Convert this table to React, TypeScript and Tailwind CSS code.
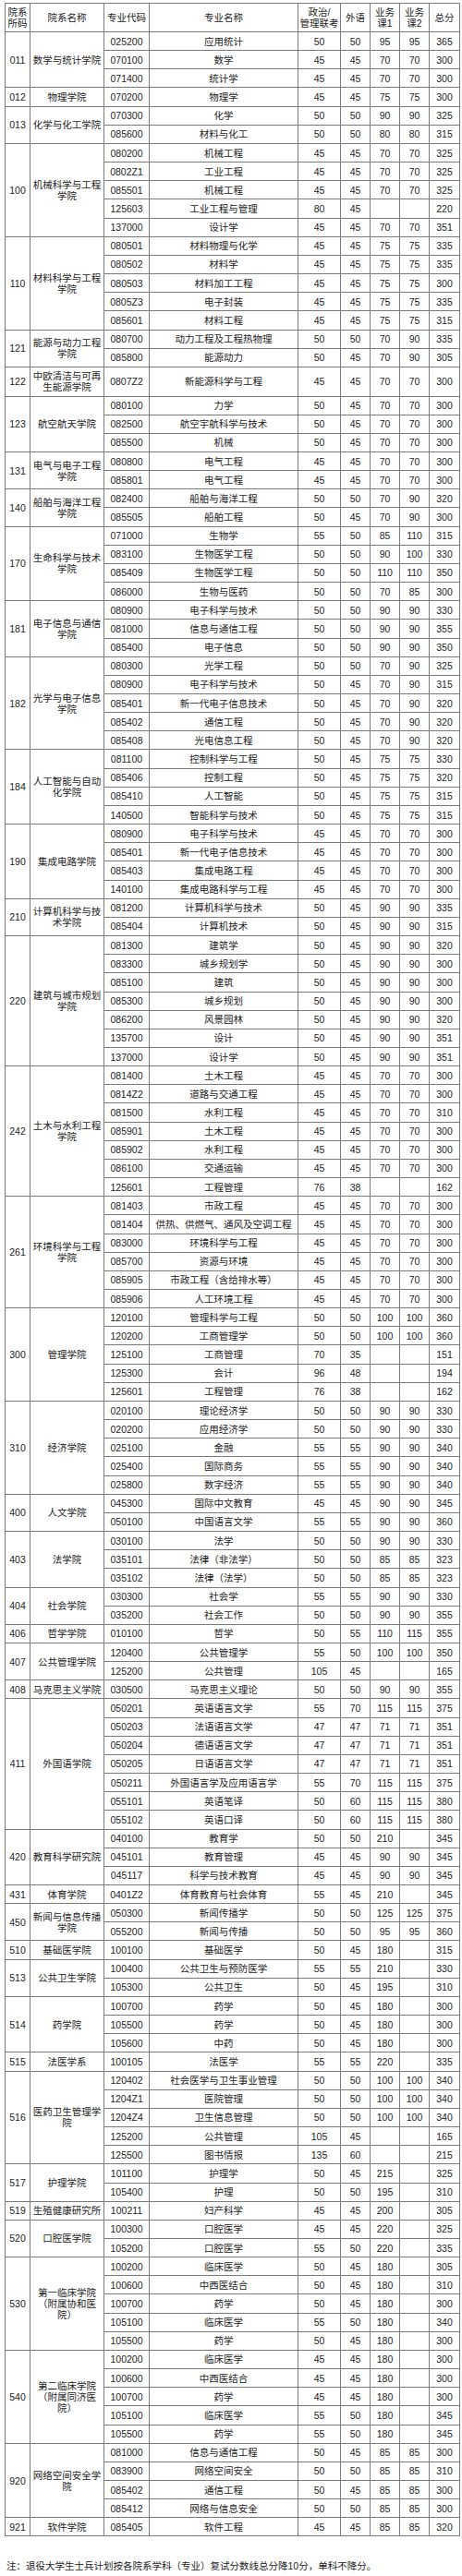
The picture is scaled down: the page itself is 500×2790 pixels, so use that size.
type Group = { code: string; name: string[]; tall?: boolean; rows: string[] };

const groups: Group[] = [
  { code: "011", name: ["数学与统计学院"], rows: ["025200 应用统计 50 50 95 95 365", "070100 数学 45 45 70 70 300", "071400 统计学 45 45 70 70 300"] },
  { code: "012", name: ["物理学院"], rows: ["070200 物理学 45 45 75 75 300"] },
  { code: "013", name: ["化学与化工学院"], rows: ["070300 化学 50 50 90 90 325", "085600 材料与化工 50 50 80 80 315"] },
  {
    code: "100",
    name: ["机械科学与工程", "学院"],
    rows: ["080200 机械工程 45 45 70 70 325", "0802Z1 工业工程 45 45 70 70 325", "085501 机械工程 45 45 70 70 325", "125603 工业工程与管理 80 45 - - 220", "137000 设计学 45 45 70 70 351"],
  },
  {
    code: "110",
    name: ["材料科学与工程", "学院"],
    rows: ["080501 材料物理与化学 45 45 75 75 335", "080502 材料学 45 45 75 75 335", "080503 材料加工工程 45 45 75 75 300", "0805Z3 电子封装 45 45 75 75 335", "085601 材料工程 45 45 75 75 315"],
  },
  { code: "121", name: ["能源与动力工程", "学院"], rows: ["080700 动力工程及工程热物理 50 50 70 90 335", "085800 能源动力 50 45 70 90 305"] },
  { code: "122", name: ["中欧清洁与可再", "生能源学院"], tall: true, rows: ["0807Z2 新能源科学与工程 45 45 70 70 300"] },
  { code: "123", name: ["航空航天学院"], rows: ["080100 力学 50 45 70 70 300", "082500 航空宇航科学与技术 50 45 70 70 300", "085500 机械 50 45 70 70 300"] },
  { code: "131", name: ["电气与电子工程", "学院"], rows: ["080800 电气工程 45 45 70 70 300", "085801 电气工程 45 45 70 70 300"] },
  { code: "140", name: ["船舶与海洋工程", "学院"], rows: ["082400 船舶与海洋工程 50 50 70 90 320", "085505 船舶工程 50 45 70 90 300"] },
  {
    code: "170",
    name: ["生命科学与技术", "学院"],
    rows: ["071000 生物学 55 50 85 110 315", "083100 生物医学工程 50 50 90 100 330", "085409 生物医学工程 50 50 110 110 350", "086000 生物与医药 50 50 70 85 300"],
  },
  { code: "181", name: ["电子信息与通信", "学院"], rows: ["080900 电子科学与技术 50 50 90 90 330", "081000 信息与通信工程 50 50 90 90 355", "085400 电子信息 50 50 90 90 350"] },
  {
    code: "182",
    name: ["光学与电子信息", "学院"],
    rows: ["080300 光学工程 50 50 70 90 325", "080900 电子科学与技术 50 45 70 90 315", "085401 新一代电子信息技术 50 45 70 90 320", "085402 通信工程 50 45 70 90 320", "085408 光电信息工程 50 45 70 90 320"],
  },
  {
    code: "184",
    name: ["人工智能与自动", "化学院"],
    rows: ["081100 控制科学与工程 50 45 75 75 330", "085406 控制工程 50 45 75 75 320", "085410 人工智能 50 45 75 75 315", "140500 智能科学与技术 50 45 75 75 315"],
  },
  {
    code: "190",
    name: ["集成电路学院"],
    rows: ["080900 电子科学与技术 45 45 70 70 300", "085401 新一代电子信息技术 45 45 70 70 300", "085403 集成电路工程 45 45 70 70 300", "140100 集成电路科学与工程 45 45 70 70 300"],
  },
  { code: "210", name: ["计算机科学与技", "术学院"], rows: ["081200 计算机科学与技术 50 45 90 90 335", "085404 计算机技术 50 45 90 90 315"] },
  {
    code: "220",
    name: ["建筑与城市规划", "学院"],
    rows: [
      "081300 建筑学 50 45 90 90 320",
      "083300 城乡规划学 50 45 90 90 300",
      "085100 建筑 50 45 90 90 300",
      "085300 城乡规划 50 45 90 90 300",
      "086200 风景园林 50 45 90 90 320",
      "135700 设计 50 45 90 90 351",
      "137000 设计学 50 45 90 90 351",
    ],
  },
  {
    code: "242",
    name: ["土木与水利工程", "学院"],
    rows: [
      "081400 土木工程 45 45 70 70 300",
      "0814Z2 道路与交通工程 45 45 70 70 300",
      "081500 水利工程 45 45 70 70 310",
      "085901 土木工程 45 45 70 70 300",
      "085902 水利工程 45 45 70 70 300",
      "086100 交通运输 45 45 70 70 300",
      "125601 工程管理 76 38 - - 162",
    ],
  },
  {
    code: "261",
    name: ["环境科学与工程", "学院"],
    rows: [
      "081403 市政工程 45 45 70 70 300",
      "081404 供热、供燃气、通风及空调工程 45 45 70 70 300",
      "083000 环境科学与工程 45 45 70 70 300",
      "085700 资源与环境 45 45 70 70 300",
      "085905 市政工程（含给排水等） 45 45 70 70 300",
      "085906 人工环境工程 45 45 70 70 300",
    ],
  },
  {
    code: "300",
    name: ["管理学院"],
    rows: ["120100 管理科学与工程 50 50 100 100 360", "120200 工商管理学 50 50 100 100 360", "125100 工商管理 70 35 - - 151", "125300 会计 96 48 - - 194", "125601 工程管理 76 38 - - 162"],
  },
  {
    code: "310",
    name: ["经济学院"],
    rows: ["020100 理论经济学 50 50 90 90 330", "020200 应用经济学 50 50 90 90 330", "025100 金融 55 55 90 90 340", "025400 国际商务 55 55 90 90 340", "025800 数字经济 55 55 90 90 340"],
  },
  { code: "400", name: ["人文学院"], rows: ["045300 国际中文教育 45 45 90 90 345", "050100 中国语言文学 55 55 90 90 360"] },
  { code: "403", name: ["法学院"], rows: ["030100 法学 50 50 90 90 330", "035101 法律（非法学） 50 50 85 85 323", "035102 法律（法学） 50 50 85 85 323"] },
  { code: "404", name: ["社会学院"], rows: ["030300 社会学 55 55 90 90 330", "035200 社会工作 50 50 90 90 355"] },
  { code: "406", name: ["哲学学院"], rows: ["010100 哲学 50 55 110 115 355"] },
  { code: "407", name: ["公共管理学院"], rows: ["120400 公共管理学 55 50 100 100 350", "125200 公共管理 105 45 - - 165"] },
  { code: "408", name: ["马克思主义学院"], rows: ["030500 马克思主义理论 50 50 90 90 355"] },
  {
    code: "411",
    name: ["外国语学院"],
    rows: [
      "050201 英语语言文学 55 70 115 115 375",
      "050203 法语语言文学 47 47 71 71 351",
      "050204 德语语言文学 47 47 71 71 351",
      "050205 日语语言文学 47 47 71 71 351",
      "050211 外国语言学及应用语言学 55 70 115 115 375",
      "055101 英语笔译 50 60 115 115 380",
      "055102 英语口译 50 60 115 115 380",
    ],
  },
  { code: "420", name: ["教育科学研究院"], rows: ["040100 教育学 50 50 210 - 345", "045101 教育管理 45 45 90 90 345", "045117 科学与技术教育 45 45 90 90 345"] },
  { code: "431", name: ["体育学院"], rows: ["0401Z2 体育教育与社会体育 55 45 210 - 345"] },
  { code: "450", name: ["新闻与信息传播", "学院"], rows: ["050300 新闻传播学 50 50 125 125 375", "055200 新闻与传播 50 50 95 95 360"] },
  { code: "510", name: ["基础医学院"], rows: ["100100 基础医学 50 45 180 - 315"] },
  { code: "513", name: ["公共卫生学院"], rows: ["100400 公共卫生与预防医学 55 55 210 - 330", "105300 公共卫生 50 45 195 - 310"] },
  { code: "514", name: ["药学院"], rows: ["100700 药学 50 45 180 - 300", "105500 药学 50 45 180 - 300", "105600 中药 50 45 180 - 300"] },
  { code: "515", name: ["法医学系"], rows: ["100105 法医学 55 55 220 - 335"] },
  {
    code: "516",
    name: ["医药卫生管理学", "院"],
    rows: [
      "120402 社会医学与卫生事业管理 50 50 100 100 340",
      "1204Z1 医院管理 50 50 100 100 340",
      "1204Z4 卫生信息管理 50 50 100 100 340",
      "125200 公共管理 105 45 - - 165",
      "125500 图书情报 135 60 - - 215",
    ],
  },
  { code: "517", name: ["护理学院"], rows: ["101100 护理学 50 45 215 - 325", "105400 护理 50 50 195 - 310"] },
  { code: "519", name: ["生殖健康研究所"], rows: ["100211 妇产科学 45 45 200 - 305"] },
  { code: "520", name: ["口腔医学院"], rows: ["100300 口腔医学 45 45 220 - 325", "105200 口腔医学 55 50 220 - 335"] },
  {
    code: "530",
    name: ["第一临床学院", "（附属协和医", "院）"],
    rows: ["100200 临床医学 50 45 180 - 305", "100600 中西医结合 50 45 180 - 310", "100700 药学 50 45 180 - 300", "105100 临床医学 55 50 180 - 340", "105500 药学 50 45 180 - 300"],
  },
  {
    code: "540",
    name: ["第二临床学院", "（附属同济医", "院）"],
    rows: ["100200 临床医学 45 45 180 - 300", "100600 中西医结合 45 45 180 - 300", "100700 药学 45 45 180 - 300", "105100 临床医学 55 50 180 - 345", "105500 药学 55 50 180 - 345"],
  },
  {
    code: "920",
    name: ["网络空间安全学", "院"],
    rows: ["081000 信息与通信工程 50 45 85 85 300", "083900 网络空间安全 50 50 85 85 310", "085402 通信工程 50 45 85 85 300", "085412 网络与信息安全 50 50 85 85 300"],
  },
  { code: "921", name: ["软件学院"], rows: ["085405 软件工程 45 45 85 85 320"] },
];

const cell = "border border-[#7a7a7a] p-0 text-center align-middle";

function Lines({ items }: { items: string[] }) {
  return (
    <>
      {items.map((t, i) => (
        <div key={i}>{t}</div>
      ))}
    </>
  );
}

export default function App() {
  return (
    <div className="bg-white w-[500px] min-h-[2790px] pt-[3px] font-['Liberation_Sans','Noto_Sans_CJK_SC',sans-serif] text-[10.5px] leading-[12px] text-[#222]">
      <table className="ml-[5px] w-[492px] table-fixed border-collapse">
        <colgroup>
          <col className="w-[27px]" />
          <col className="w-[80px]" />
          <col className="w-[49px]" />
          <col className="w-[161px]" />
          <col className="w-[46px]" />
          <col className="w-[32px]" />
          <col className="w-[32px]" />
          <col className="w-[32px]" />
          <col className="w-[33px]" />
        </colgroup>
        <thead>
          <tr className="h-[31px]">
            <th className={`${cell} font-normal`}>
              <Lines items={["院系", "所码"]} />
            </th>
            <th className={`${cell} font-normal`}>院系名称</th>
            <th className={`${cell} font-normal`}>专业代码</th>
            <th className={`${cell} font-normal`}>专业名称</th>
            <th className={`${cell} font-normal`}>
              <Lines items={["政治/", "管理联考"]} />
            </th>
            <th className={`${cell} font-normal`}>外语</th>
            <th className={`${cell} font-normal`}>
              <Lines items={["业务", "课1"]} />
            </th>
            <th className={`${cell} font-normal`}>
              <Lines items={["业务", "课2"]} />
            </th>
            <th className={`${cell} font-normal`}>总分</th>
          </tr>
        </thead>
        <tbody>
          {groups.map((g) =>
            g.rows.map((r, i) => {
              const [mc, mn, a, b, c, d, t] = r.split(" ");
              return (
                <tr key={g.code + i} className={g.tall ? "h-[31.7px]" : "h-[20.17px]"}>
                  {i === 0 && (
                    <>
                      <td rowSpan={g.rows.length} className={cell}>
                        {g.code}
                      </td>
                      <td rowSpan={g.rows.length} className={cell}>
                        <Lines items={g.name} />
                      </td>
                    </>
                  )}
                  <td className={cell}>{mc}</td>
                  <td className={cell}>{mn}</td>
                  <td className={cell}>{a}</td>
                  <td className={cell}>{b}</td>
                  <td className={cell}>{c === "-" ? "" : c}</td>
                  <td className={cell}>{d === "-" ? "" : d}</td>
                  <td className={cell}>{t}</td>
                </tr>
              );
            })
          )}
        </tbody>
      </table>
      <p className="ml-[7px] mt-[26px]">注：退役大学生士兵计划按各院系学科（专业）复试分数线总分降10分，单科不降分。</p>
    </div>
  );
}
